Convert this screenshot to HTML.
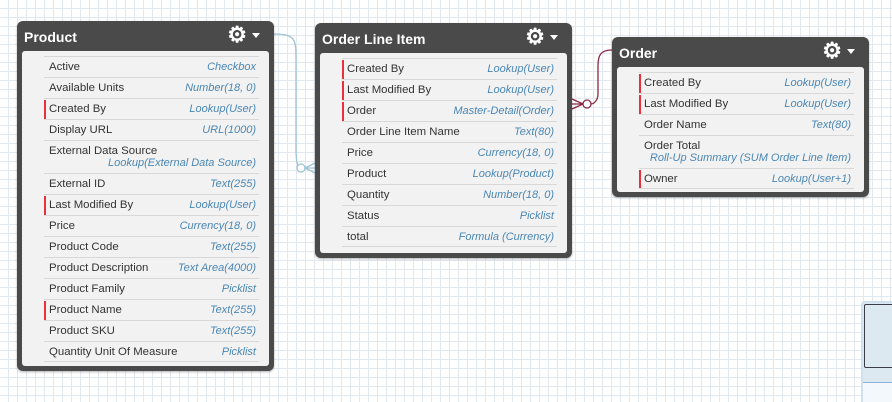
<!DOCTYPE html>
<html><head><style>
*{margin:0;padding:0;box-sizing:border-box}
html,body{width:892px;height:402px;overflow:hidden}
body{font-family:"Liberation Sans",Arial,sans-serif;background-color:#fff;
background-image:linear-gradient(#e2e8ef 1px,transparent 1px),linear-gradient(90deg,#e2e8ef 1px,transparent 1px);background-size:9px 9px;background-position:-1px -1px;position:relative}
.card{position:absolute;background:#4a4a4a;border-radius:6px;box-shadow:0 1px 2px rgba(0,0,0,.3)}
.card h3{position:absolute;left:7px;top:8px;color:#fff;font-size:14px;font-weight:bold}
.gear{position:absolute;top:1px;right:27px;color:#fff;font-size:22px;line-height:26px;font-weight:bold}
.gear:after{content:"";position:absolute;right:-13px;top:11px;border:4px solid transparent;border-top:5px solid #fff;border-bottom:0}
.body{position:absolute;left:5px;right:5px;top:30px;bottom:5px;background:#f2f2f2;border-radius:3px;padding-top:5px}
.row{position:relative;margin-left:22px;margin-right:10px;height:21px;border-top:1px solid #d8d8d8;font-size:11.4px;color:#333}
.row .n{position:absolute;left:5px;top:4px}
.row .t{position:absolute;right:3px;top:4px;color:#4a87b5;font-style:italic;font-size:11px}
.row.tall{height:33px}
.row.tall .t{top:16px}
.row.req:before{content:"";position:absolute;left:0;top:1px;bottom:0;width:2px;background:#e8313c}
.row.last{border-bottom:1px solid #d8d8d8}
</style></head><body>
<svg width="892" height="402" style="position:absolute;left:0;top:0">
<path d="M274 34 C296 34 296 40 296 60 L296 150 C296 162 298 168 300 168" fill="none" stroke="#9cc3d3" stroke-width="1.3"/>
<circle cx="301" cy="168" r="4" fill="#fff" stroke="#9cc3d3" stroke-width="1.3"/>
<path d="M305 168 L315 163 M305 168 L315 168 M305 168 L315 173" stroke="#9cc3d3" stroke-width="1.3"/>
<path d="M612 50 C600 50 598 56 598 66 L598 94 C598 100 594 104 591 104" fill="none" stroke="#8a2a45" stroke-width="1.3"/>
<circle cx="587" cy="104" r="4" fill="#fff" stroke="#8a2a45" stroke-width="1.3"/>
<path d="M583 104 L572 99 M583 104 L572 104 M583 104 L572 109" stroke="#8a2a45" stroke-width="1.3"/>
</svg>

<div class="card" style="left:17px;top:21px;width:257px;height:350px">
<h3>Product</h3><div class="gear">⚙</div>
<div class="body">
<div class="row"><span class="n">Active</span><span class="t">Checkbox</span></div>
<div class="row"><span class="n">Available Units</span><span class="t">Number(18, 0)</span></div>
<div class="row req"><span class="n">Created By</span><span class="t">Lookup(User)</span></div>
<div class="row"><span class="n">Display URL</span><span class="t">URL(1000)</span></div>
<div class="row tall"><span class="n">External Data Source</span><span class="t">Lookup(External Data Source)</span></div>
<div class="row"><span class="n">External ID</span><span class="t">Text(255)</span></div>
<div class="row req"><span class="n">Last Modified By</span><span class="t">Lookup(User)</span></div>
<div class="row"><span class="n">Price</span><span class="t">Currency(18, 0)</span></div>
<div class="row"><span class="n">Product Code</span><span class="t">Text(255)</span></div>
<div class="row"><span class="n">Product Description</span><span class="t">Text Area(4000)</span></div>
<div class="row"><span class="n">Product Family</span><span class="t">Picklist</span></div>
<div class="row req"><span class="n">Product Name</span><span class="t">Text(255)</span></div>
<div class="row"><span class="n">Product SKU</span><span class="t">Text(255)</span></div>
<div class="row last"><span class="n">Quantity Unit Of Measure</span><span class="t">Picklist</span></div>
</div></div>

<div class="card" style="left:315px;top:23px;width:257px;height:235px">
<h3>Order Line Item</h3><div class="gear">⚙</div>
<div class="body">
<div class="row req"><span class="n">Created By</span><span class="t">Lookup(User)</span></div>
<div class="row req"><span class="n">Last Modified By</span><span class="t">Lookup(User)</span></div>
<div class="row req"><span class="n">Order</span><span class="t">Master-Detail(Order)</span></div>
<div class="row"><span class="n">Order Line Item Name</span><span class="t">Text(80)</span></div>
<div class="row"><span class="n">Price</span><span class="t">Currency(18, 0)</span></div>
<div class="row"><span class="n">Product</span><span class="t">Lookup(Product)</span></div>
<div class="row"><span class="n">Quantity</span><span class="t">Number(18, 0)</span></div>
<div class="row"><span class="n">Status</span><span class="t">Picklist</span></div>
<div class="row last"><span class="n">total</span><span class="t">Formula (Currency)</span></div>
</div></div>

<div class="card" style="left:612px;top:37px;width:257px;height:160px">
<h3>Order</h3><div class="gear">⚙</div>
<div class="body">
<div class="row req"><span class="n">Created By</span><span class="t">Lookup(User)</span></div>
<div class="row req"><span class="n">Last Modified By</span><span class="t">Lookup(User)</span></div>
<div class="row"><span class="n">Order Name</span><span class="t">Text(80)</span></div>
<div class="row tall"><span class="n">Order Total</span><span class="t">Roll-Up Summary (SUM Order Line Item)</span></div>
<div class="row req last"><span class="n">Owner</span><span class="t">Lookup(User+1)</span></div>
</div></div>

<div style="position:absolute;left:861px;top:301px;width:40px;height:110px;background:#dde9f1;border:2px solid #cfe0ee;border-radius:4px"></div>
<div style="position:absolute;left:864px;top:304px;width:40px;height:64px;border:1px solid #3a3f45;border-radius:2px"></div>
<div style="position:absolute;left:863px;top:382px;width:40px;height:20px;background:#f2f8fc;border-top:1px solid #8db4d6"></div>
</body></html>
